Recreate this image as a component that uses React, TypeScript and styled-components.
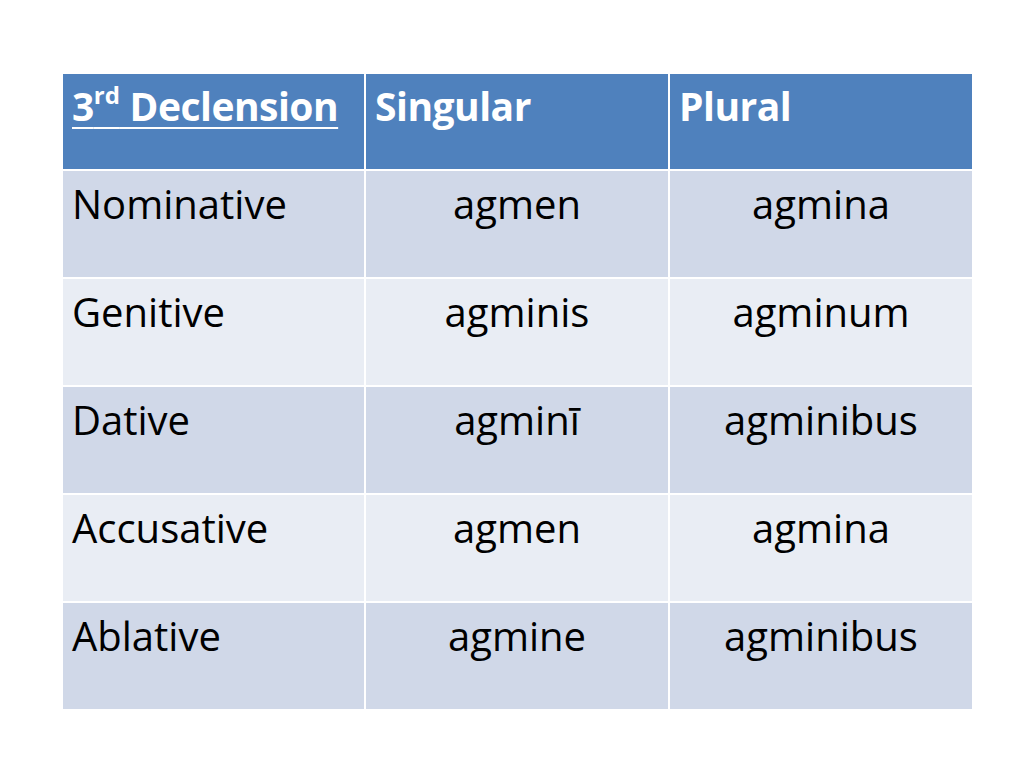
import React from "react";
import styled, { createGlobalStyle } from "styled-components";

const Global = createGlobalStyle`
  html, body { margin: 0; padding: 0; background: #ffffff; }
  body { font-family: "Open Sans", "Liberation Sans", sans-serif; }
`;

const Page = styled.div`
  width: 1024px;
  height: 768px;
  padding: 74px 0 0 63px;
  box-sizing: border-box;
`;

const Table = styled.div`
  display: grid;
  grid-template-columns: 301px 302px 302px;
  grid-template-rows: 95px repeat(5, 106px);
  gap: 2px;
  width: 909px;
  background: #ffffff;
`;

const HeadCell = styled.div`
  background: #4f81bd;
  color: #ffffff;
  font-weight: 700;
  font-size: 39px;
  line-height: 1;
  padding: 12px 0 0 9px;
  box-sizing: border-box;
  letter-spacing: -0.5px;
  white-space: nowrap;
`;

const Under = styled.span`
  text-decoration: underline;
  text-decoration-thickness: 2px;
  text-underline-offset: 6px;
`;

const Sup = styled.sup`
  font-size: 24px;
  vertical-align: top;
  position: relative;
  top: -3px;
  letter-spacing: 0;
`;

const Cell = styled.div<{ $odd: boolean; $center?: boolean }>`
  background: ${(p) => (p.$odd ? "#d0d8e8" : "#e9edf4")};
  color: #000000;
  font-size: 40px;
  line-height: 1;
  padding: 13px 9px 0 9px;
  box-sizing: border-box;
  text-align: ${(p) => (p.$center ? "center" : "left")};
  white-space: nowrap;
`;

const rows: [string, string, string][] = [
  ["Nominative", "agmen", "agmina"],
  ["Genitive", "agminis", "agminum"],
  ["Dative", "agminī", "agminibus"],
  ["Accusative", "agmen", "agmina"],
  ["Ablative", "agmine", "agminibus"],
];

export default function App() {
  return (
    <>
      <Global />
      <Page>
        <Table>
          <HeadCell>
            <Under>
              3<Sup>rd</Sup> Declension
            </Under>
          </HeadCell>
          <HeadCell>Singular</HeadCell>
          <HeadCell>Plural</HeadCell>
          {rows.map((r, i) => (
            <React.Fragment key={r[0]}>
              <Cell $odd={i % 2 === 0}>{r[0]}</Cell>
              <Cell $odd={i % 2 === 0} $center>
                {r[1]}
              </Cell>
              <Cell $odd={i % 2 === 0} $center>
                {r[2]}
              </Cell>
            </React.Fragment>
          ))}
        </Table>
      </Page>
    </>
  );
}
